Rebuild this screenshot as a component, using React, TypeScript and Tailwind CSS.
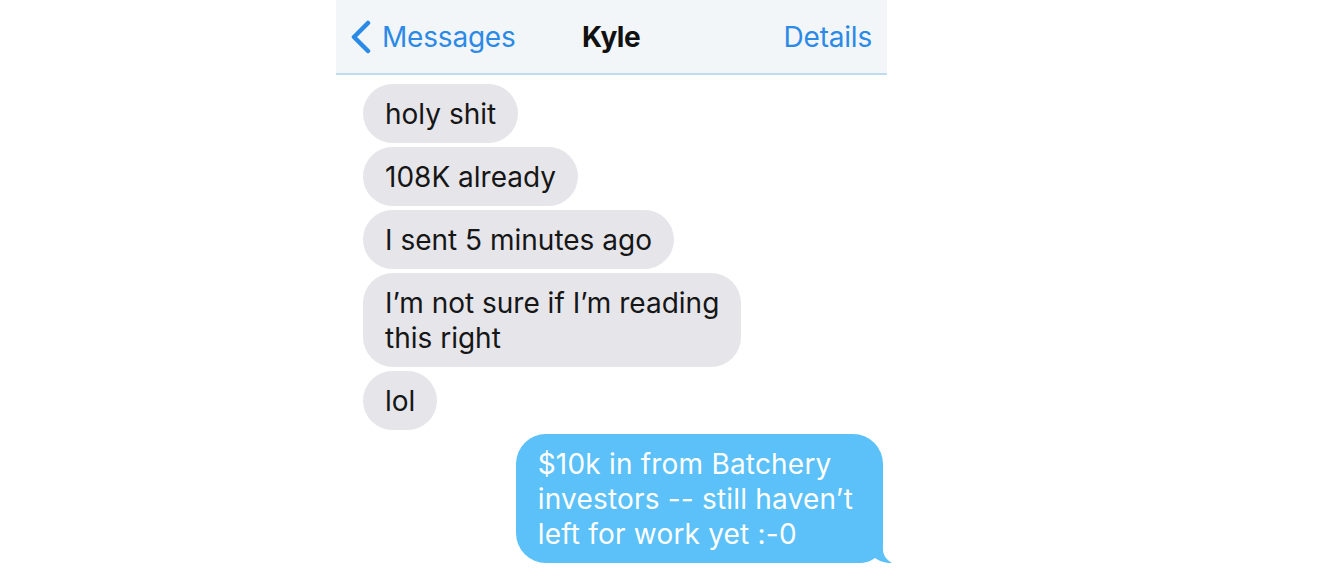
import React from "react";

const gray = [
  ["holy shit"],
  ["108K already"],
  ["I sent 5 minutes ago"],
  ["I’m not sure if I’m reading", "this right"],
  ["lol"],
];

export default function App() {
  return (
    <div className="w-[1320px] h-[588px] bg-white overflow-hidden" style={{ fontFamily: "Inter, 'Liberation Sans', sans-serif" }}>
      <div className="ml-[336px] w-[551px] flex flex-col">
        <div className="h-[75px] bg-[#f3f6f8] border-b-2 border-[#bfdcf0] grid grid-cols-[1fr_auto_1fr] items-center pl-[14px] pr-[15px] text-[28px] tracking-[-0.2px]">
          <div className="flex items-center gap-[10px] text-[#2b8ae6] justify-self-start">
            <svg width="22" height="34" viewBox="0 0 22 34">
              <path d="M18 3 L4 17 L18 31" fill="none" stroke="#2b8ae6" strokeWidth="4.5" strokeLinecap="round" strokeLinejoin="round" />
            </svg>
            <span>Messages</span>
          </div>
          <span className="font-bold text-[#111] tracking-[-0.5px]">Kyle</span>
          <span className="text-[#2b8ae6] justify-self-end">Details</span>
        </div>
        <div className="flex flex-col gap-[4px] pt-[9px] pl-[27px] pr-[4px]">
          {gray.map((lines, i) => (
            <div key={i} className="self-start bg-[#e5e5ea] rounded-[30px] pl-[22px] pr-[22px] pt-[13px] pb-[11px] text-[28px] leading-[35px] text-[#161616]">
              {lines.map((l, j) => (
                <div key={j}>{l}</div>
              ))}
            </div>
          ))}
          <div className="relative self-end bg-[#5bc1f8] rounded-[30px] pl-[22px] pr-[30px] pt-[13px] pb-[11px] text-[28px] leading-[35px] text-white tracking-[0.2px]">
            <div>$10k in from Batchery</div>
            <div>investors -- still haven’t</div>
            <div>left for work yet :-0</div>
            <svg className="absolute right-[-9px] bottom-0" width="40" height="32" viewBox="0 0 40 32">
              <path d="M0 0 H31 V18 C31 25 35 29 40 32 C33 32 27 30 23 27 C19 30 14 32 6 32 H0 Z" fill="#5bc1f8" />
            </svg>
          </div>
        </div>
      </div>
    </div>
  );
}
